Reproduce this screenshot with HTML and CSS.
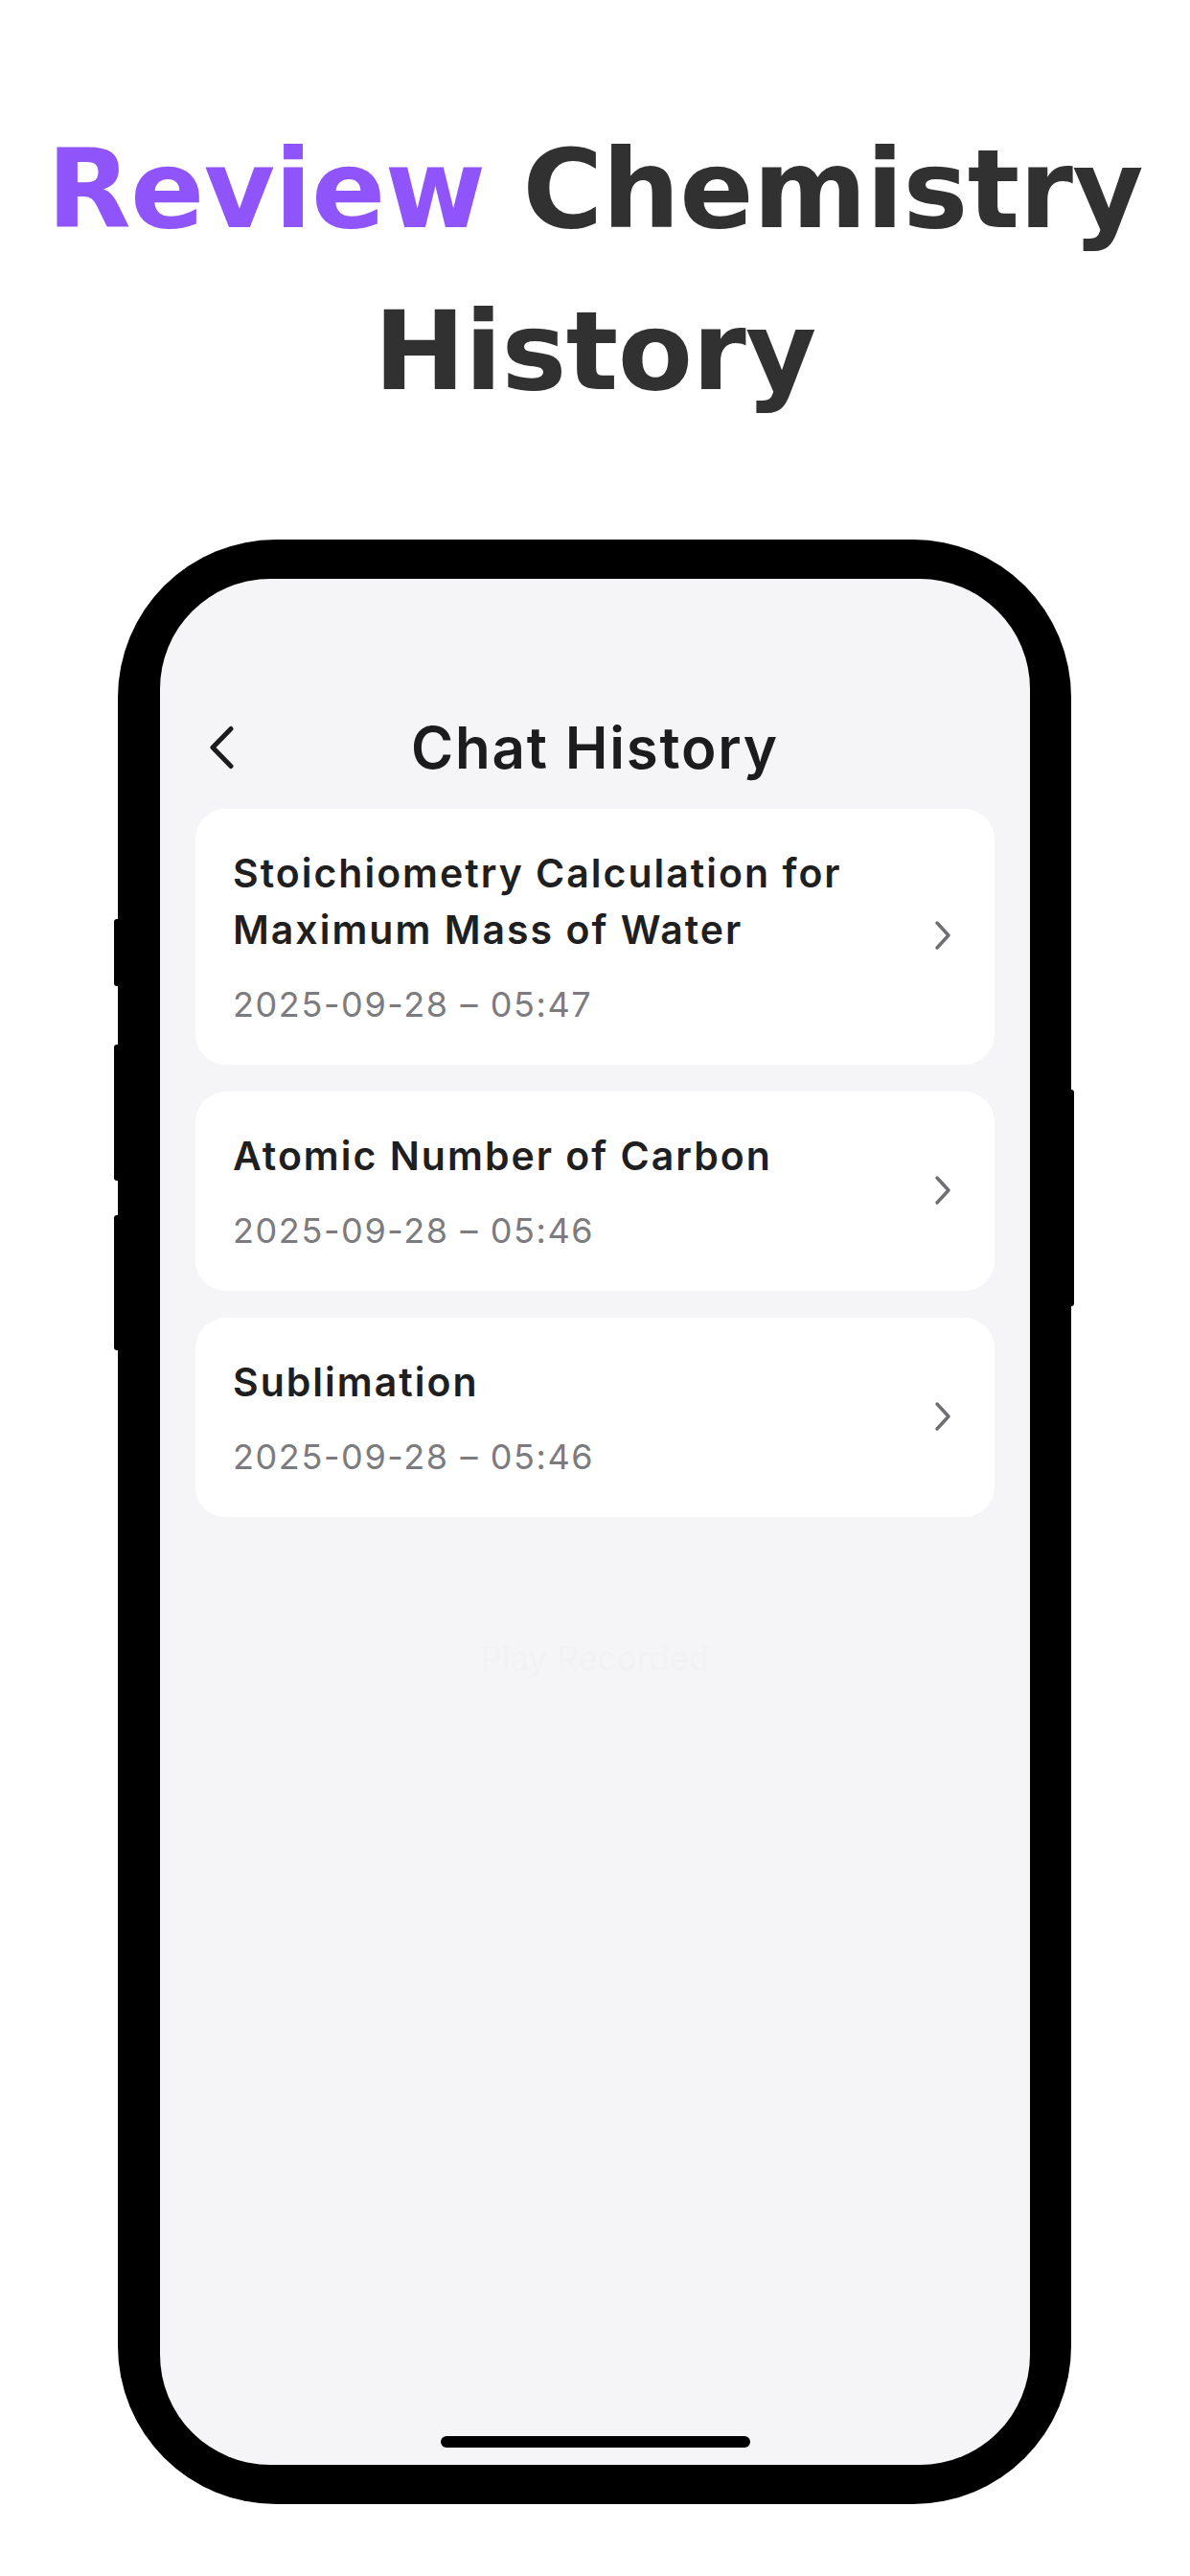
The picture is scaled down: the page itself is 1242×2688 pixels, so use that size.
FILE: index.html
```html
<!DOCTYPE html>
<html>
<head>
    <title>Review Chemistry History</title>
    <link rel="stylesheet" href="styles.css">
</head>
<body>
    <header class="hero">
        <h1><span class="accent">Review</span> Chemistry<br>History</h1>
    </header>

    <div class="phone">
        <span class="btn btn-mute"></span>
        <span class="btn btn-volup"></span>
        <span class="btn btn-voldown"></span>
        <span class="btn btn-power"></span>

        <div class="screen">
            <nav class="navbar">
                <a class="back" href="#">
                    <svg width="28" height="48" viewBox="0 0 28 48">
                        <path d="M24 4.5 L5 24 L24 43.5" fill="none" stroke="#1c1c1e" stroke-width="5" stroke-linecap="round" stroke-linejoin="round"/>
                    </svg>
                </a>
                <div class="nav-title">Chat History</div>
                <div></div>
            </nav>

            <!-- history list -->
            <section class="history">
                <div class="card">
                    <div class="card-text">
                        <div class="card-title">Stoichiometry Calculation for Maximum Mass of Water</div>
                        <div class="card-date">2025-09-28 – 05:47</div>
                    </div>
                    <svg class="chev" width="20" height="32" viewBox="0 0 20 32">
                        <path d="M4 3 L16 16 L4 29" fill="none" stroke="#6f6f73" stroke-width="3.5" stroke-linecap="round" stroke-linejoin="round"/>
                    </svg>
                </div>
                <div class="card">
                    <div class="card-text">
                        <div class="card-title">Atomic Number of Carbon</div>
                        <div class="card-date">2025-09-28 – 05:46</div>
                    </div>
                    <svg class="chev" width="20" height="32" viewBox="0 0 20 32">
                        <path d="M4 3 L16 16 L4 29" fill="none" stroke="#6f6f73" stroke-width="3.5" stroke-linecap="round" stroke-linejoin="round"/>
                    </svg>
                </div>
                <div class="card">
                    <div class="card-text">
                        <div class="card-title">Sublimation</div>
                        <div class="card-date">2025-09-28 – 05:46</div>
                    </div>
                    <svg class="chev" width="20" height="32" viewBox="0 0 20 32">
                        <path d="M4 3 L16 16 L4 29" fill="none" stroke="#6f6f73" stroke-width="3.5" stroke-linecap="round" stroke-linejoin="round"/>
                    </svg>
                </div>
            </section>

            <div class="ghost">Play Recorded</div>

            <div class="home-bar"></div>
        </div>
    </div>
</body>
</html>
```

FILE: styles.css
```css
body {
    margin: 0;
    padding: 0;
    width: 1242px;
    height: 2688px;
    background-color: #ffffff;
    overflow: hidden;
}

.hero {
    padding-top: 113px;
    text-align: center;
}

.hero h1 {
    margin: 0;
    font-family: "DejaVu Sans", sans-serif;
    font-weight: bold;
    font-size: 114px;
    line-height: 169px;
    letter-spacing: -0.6px;
    color: #313131;
}

.accent {
    color: #8f55fb;
}

.phone {
    position: relative;
    width: 908px;
    margin: 112px 0 0 123px;
    padding: 41px 43px 41px 44px;
    background-color: #000;
    border-radius: 165px;
}

.btn {
    position: absolute;
    width: 10px;
    background-color: #000;
    border-radius: 3px;
}

.btn-mute { left: -4px; top: 396px; height: 70px; }
.btn-volup { left: -4px; top: 527px; height: 142px; }
.btn-voldown { left: -4px; top: 705px; height: 141px; }
.btn-power { right: -3px; top: 574px; height: 226px; }

.screen {
    display: flex;
    flex-direction: column;
    height: 1968px;
    background-color: #f5f5f7;
    border-radius: 115px;
    font-family: "Inter", "Liberation Sans", sans-serif;
}

.navbar {
    display: grid;
    grid-template-columns: 1fr auto 1fr;
    align-items: center;
    height: 88px;
    margin-top: 132px;
}

.back {
    display: flex;
    padding-left: 50px;
}

.nav-title {
    font-size: 60px;
    line-height: 88px;
    font-weight: 600;
    letter-spacing: 1.8px;
    color: #1c1c1e;
}

.history {
    display: flex;
    flex-direction: column;
    gap: 28px;
    margin: 20px 37px 0;
}

.card {
    display: flex;
    align-items: center;
    padding: 38px 44px 41px 39px;
    background-color: #fff;
    border-radius: 32px;
}

.card-text {
    flex: 1;
}

.card-title {
    font-size: 41px;
    line-height: 59px;
    font-weight: 600;
    letter-spacing: 2px;
    color: #1f1f21;
}

.card-date {
    margin-top: 26px;
    font-size: 36px;
    line-height: 44px;
    letter-spacing: 1.6px;
    color: #7b7b80;
}

.chev {
    flex: none;
}

.ghost {
    margin-top: 126px;
    text-align: center;
    font-size: 35px;
    line-height: 42px;
    color: #f2f2f4;
}

.home-bar {
    align-self: center;
    width: 323px;
    height: 12px;
    margin: auto 0 18px;
    background-color: #000;
    border-radius: 6px;
}
```
